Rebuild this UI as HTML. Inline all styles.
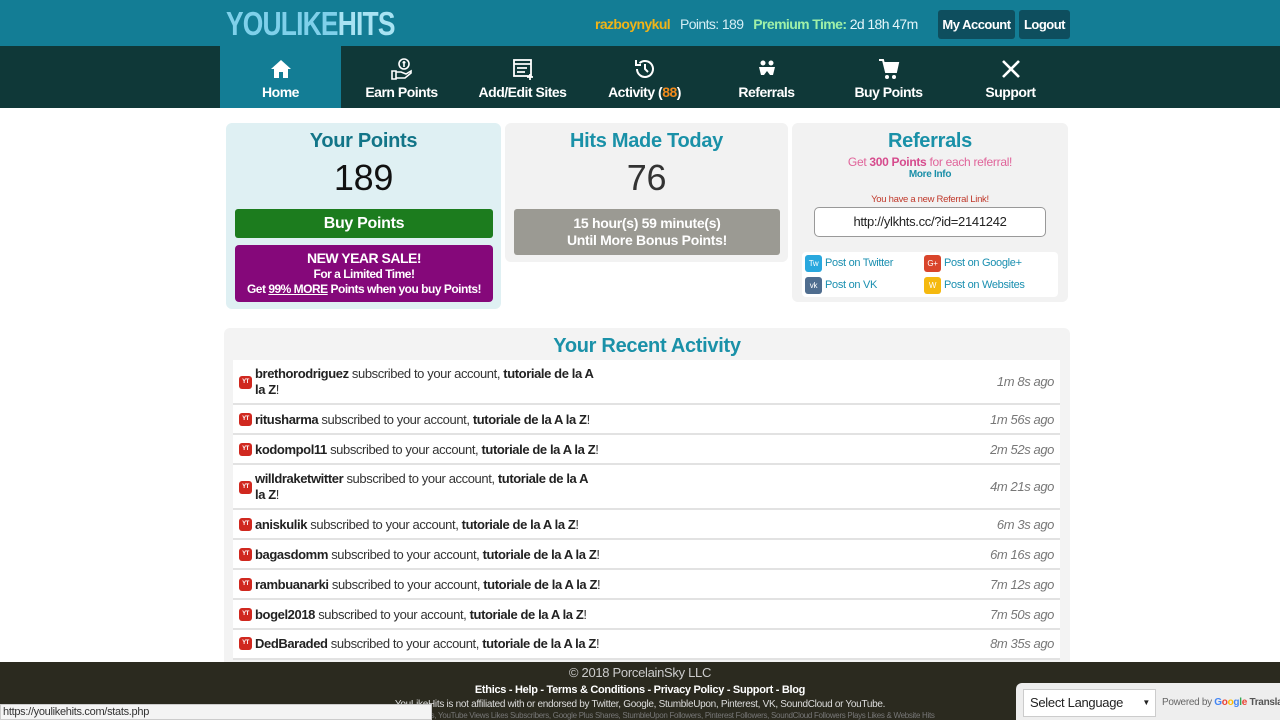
<!DOCTYPE html>
<html><head><meta charset="utf-8"><style>
*{box-sizing:border-box;margin:0;padding:0}
body{width:1280px;height:720px;overflow:hidden;background:#fff;font-family:"Liberation Sans",Arial,sans-serif;position:relative;letter-spacing:-0.3px}
.abs{position:absolute}
#top{left:0;top:0;width:1280px;height:46px;background:#137d95}
#nav{left:0;top:46px;width:1280px;height:62px;background:#0f3838}
.ni{position:absolute;top:46px;width:121px;height:62px;color:#fff;font-weight:bold;font-size:14px;text-align:center;letter-spacing:-0.5px}
.ni svg{display:block;margin:11px auto 3px;width:24px;height:24px}
.card{position:absolute;border-radius:6px;text-align:center}
h2{font-size:20px;font-weight:bold;color:#1a91a8}
.row{position:absolute;left:233px;width:827px;background:#fff;border-bottom:2px solid #e2e2e2;font-size:13px;color:#333;letter-spacing:-0.4px}
.row .t{position:absolute;left:22px;width:345px;line-height:16px}
.row .yt{position:absolute;left:6px;width:13px;height:13px;background:#d0281f;border-radius:3px;color:#fff;font-size:6px;line-height:13px;text-align:center;font-weight:bold}
.row .ago{position:absolute;right:6px;font-style:italic;color:#777;font-size:13px}
b{color:#222}
.soc{position:absolute;font-size:11px;color:#1a8fb0;line-height:18px}
.soc i{display:inline-block;width:17px;height:17px;border-radius:3px;color:#fff;font-style:normal;font-size:8px;text-align:center;line-height:17px;vertical-align:middle;margin-right:3px}
</style></head><body>
<div id="top" class="abs"></div>
<div class="abs" style="left:226px;top:5px;font-size:33px;font-weight:bold;color:#7fd0ea;letter-spacing:-1px;transform:scaleX(0.8);transform-origin:left">YOULIKE<span style="color:#a8e3f3">HITS</span></div>
<div class="abs" style="left:595px;top:16px;font-size:14px;font-weight:bold;white-space:nowrap;letter-spacing:-0.6px"><span style="color:#f0b418">razboynykul</span>&nbsp;&nbsp; <span style="color:#d5eef5;font-weight:normal">Points: 189</span>&nbsp;&nbsp; <span style="color:#9ff0a8">Premium Time:</span> <span style="color:#e6f6fa;font-weight:normal">2d 18h 47m</span></div>
<div class="abs" style="left:938px;top:10px;width:77px;height:29px;background:#0e4e5e;border-radius:3px;color:#fff;font-weight:bold;font-size:13px;line-height:29px;text-align:center;letter-spacing:-0.5px">My Account</div>
<div class="abs" style="left:1019px;top:10px;width:51px;height:29px;background:#0e4e5e;border-radius:3px;color:#fff;font-weight:bold;font-size:13px;line-height:29px;text-align:center;letter-spacing:-0.5px">Logout</div>
<div id="nav" class="abs"></div>
<div class="ni" style="left:220px;background:#137d95"><svg viewBox="0 0 24 24"><path d="M12 3L2 12h3v9h5v-6h4v6h5v-9h3z" fill="#fff"/></svg>Home</div>
<div class="ni" style="left:341px"><svg viewBox="0 0 24 24" fill="none" stroke="#fff" stroke-width="1.6"><circle cx="14" cy="7" r="5"/><path d="M14 4v6M12.5 5.5h3M2 14h4v8H2zM6 15h5l5 2 5-3v2l-6 5H6"/></svg>Earn Points</div>
<div class="ni" style="left:462px"><svg viewBox="0 0 24 24" fill="none" stroke="#fff" stroke-width="1.8"><rect x="3" y="3" width="17" height="16"/><path d="M3 7h17M6 11h10M6 15h8"/><path d="M19 17v6M16 20h6"/></svg>Add/Edit Sites</div>
<div class="ni" style="left:584px"><svg viewBox="0 0 24 24" fill="none" stroke="#fff" stroke-width="2"><path d="M4 12a8 8 0 1 0 2.5-5.8"/><path d="M3 3v5h5M12 7v5l3 3"/></svg>Activity (<span style="color:#f08a1c">88</span>)</div>
<div class="ni" style="left:706px"><svg viewBox="0 0 24 24" fill="#fff"><circle cx="8" cy="6" r="2.5"/><circle cx="16" cy="6" r="2.5"/><path d="M4 10h16l-2 8h-3l-3-4-3 4H6z"/></svg>Referrals</div>
<div class="ni" style="left:828px"><svg viewBox="0 0 24 24" fill="#fff"><path d="M2 3h4l3 12h10l2-9H7" stroke="#fff" stroke-width="2" fill="none"/><rect x="8" y="7" width="12" height="7"/><circle cx="10" cy="20" r="2"/><circle cx="17" cy="20" r="2"/></svg>Buy Points</div>
<div class="ni" style="left:950px"><svg viewBox="0 0 24 24" fill="none" stroke="#fff" stroke-width="2.6"><path d="M4 20L20 4M4 4l16 16"/></svg>Support</div>

<div class="card" style="left:226px;top:123px;width:275px;height:186px;background:#dff0f3">
<h2 style="margin-top:7px;color:#127588">Your Points</h2>
<div style="font-size:36px;color:#111;margin-top:4px">189</div>
<div style="position:absolute;left:9px;top:86px;width:258px;height:29px;background:#1c7c1e;border-radius:3px;color:#fff;font-weight:bold;font-size:16px;line-height:29px">Buy Points</div>
<div style="position:absolute;left:9px;top:122px;width:258px;height:57px;background:#85087a;border-radius:4px;color:#fff;font-weight:bold;font-size:12px;line-height:15px;padding-top:6px;letter-spacing:-0.5px"><span style="font-size:14px">NEW YEAR SALE!</span><br>For a Limited Time!<br>Get <u>99% MORE</u> Points when you buy Points!</div>
</div>
<div class="card" style="left:505px;top:123px;width:283px;height:139px;background:#f2f2f2">
<h2 style="margin-top:7px">Hits Made Today</h2>
<div style="font-size:36px;color:#333;margin-top:4px">76</div>
<div style="position:absolute;left:9px;top:86px;width:266px;height:46px;background:#9b9a93;border-radius:3px;color:#fff;font-weight:bold;font-size:14px;line-height:17px;padding-top:6px">15 hour(s) 59 minute(s)<br>Until More Bonus Points!</div>
</div>
<div class="card" style="left:792px;top:123px;width:276px;height:179px;background:#f2f2f2">
<h2 style="margin-top:7px">Referrals</h2>
<div style="font-size:12px;color:#e0649a;margin-top:2px">Get <b style="color:#d64b8d">300 Points</b> for each referral!</div>
<div style="font-size:10px;color:#1a8fa8;font-weight:bold">More Info</div>
<div style="font-size:9.5px;color:#c0392b;margin-top:14px">You have a new Referral Link!</div>
<div style="position:absolute;left:22px;top:84px;width:232px;height:30px;border:1px solid #999;border-radius:5px;background:#fff;font-size:13px;line-height:28px;color:#222">http://ylkhts.cc/?id=2141242</div>
<div style="position:absolute;left:10px;top:129px;width:256px;height:45px;background:#fff;border-radius:4px"></div>
<div class="soc" style="left:13px;top:131px"><i style="background:#29a8de">Tw</i>Post on Twitter</div>
<div class="soc" style="left:13px;top:153px"><i style="background:#4f6d8f">vk</i>Post on VK</div>
<div class="soc" style="left:132px;top:131px"><i style="background:#d9452b">G+</i>Post on Google+</div>
<div class="soc" style="left:132px;top:153px"><i style="background:#f5b90f">W</i>Post on Websites</div>
</div>

<div class="abs" style="left:224px;top:328px;width:846px;height:340px;background:#f3f3f3;border-radius:6px"></div>
<h2 class="abs" style="left:224px;width:846px;top:335px;text-align:center">Your Recent Activity</h2>
<div class="row" style="top:360px;height:45px"><div class="yt" style="top:16px">YT</div><div class="t" style="top:6px"><b>brethorodriguez</b> subscribed to your account, <b>tutoriale de la A la Z</b>!</div><div class="ago" style="top:14px">1m 8s ago</div></div>
<div class="row" style="top:405px;height:30px"><div class="yt" style="top:8px">YT</div><div class="t" style="top:7px;width:600px"><b>ritusharma</b> subscribed to your account, <b>tutoriale de la A la Z</b>!</div><div class="ago" style="top:7px">1m 56s ago</div></div>
<div class="row" style="top:435px;height:30px"><div class="yt" style="top:8px">YT</div><div class="t" style="top:7px;width:600px"><b>kodompol11</b> subscribed to your account, <b>tutoriale de la A la Z</b>!</div><div class="ago" style="top:7px">2m 52s ago</div></div>
<div class="row" style="top:465px;height:45px"><div class="yt" style="top:16px">YT</div><div class="t" style="top:6px"><b>willdraketwitter</b> subscribed to your account, <b>tutoriale de la A la Z</b>!</div><div class="ago" style="top:14px">4m 21s ago</div></div>
<div class="row" style="top:510px;height:30px"><div class="yt" style="top:8px">YT</div><div class="t" style="top:7px;width:600px"><b>aniskulik</b> subscribed to your account, <b>tutoriale de la A la Z</b>!</div><div class="ago" style="top:7px">6m 3s ago</div></div>
<div class="row" style="top:540px;height:30px"><div class="yt" style="top:8px">YT</div><div class="t" style="top:7px;width:600px"><b>bagasdomm</b> subscribed to your account, <b>tutoriale de la A la Z</b>!</div><div class="ago" style="top:7px">6m 16s ago</div></div>
<div class="row" style="top:570px;height:30px"><div class="yt" style="top:8px">YT</div><div class="t" style="top:7px;width:600px"><b>rambuanarki</b> subscribed to your account, <b>tutoriale de la A la Z</b>!</div><div class="ago" style="top:7px">7m 12s ago</div></div>
<div class="row" style="top:600px;height:30px"><div class="yt" style="top:8px">YT</div><div class="t" style="top:7px;width:600px"><b>bogel2018</b> subscribed to your account, <b>tutoriale de la A la Z</b>!</div><div class="ago" style="top:7px">7m 50s ago</div></div>
<div class="row" style="top:630px;height:30px"><div class="yt" style="top:7px">YT</div><div class="t" style="top:6px;width:600px"><b>DedBaraded</b> subscribed to your account, <b>tutoriale de la A la Z</b>!</div><div class="ago" style="top:6px">8m 35s ago</div></div>

<div class="abs" style="left:0;top:662px;width:1280px;height:58px;background:#2b2a1f;text-align:center;color:#ddd">
<div style="font-size:13px;margin-top:3px;color:#ccc">© 2018 PorcelainSky LLC</div>
<div style="font-size:11px;font-weight:bold;margin-top:4px;color:#fff">Ethics - Help - Terms &amp; Conditions - Privacy Policy - Support - Blog</div>
<div style="font-size:10px;margin-top:3px;color:#ddd">YouLikeHits is not affiliated with or endorsed by Twitter, Google, StumbleUpon, Pinterest, VK, SoundCloud or YouTube.</div>
<div style="font-size:8px;margin-top:1px;color:#777;white-space:nowrap">Twitter Followers, Favorites, YouTube Views Likes Subscribers, Google Plus Shares, StumbleUpon Followers, Pinterest Followers, SoundCloud Followers Plays Likes &amp; Website Hits</div>
</div>
<div class="abs" style="left:0;top:704px;width:432px;height:16px;background:#f4f4f4;border:1px solid #ccc;font-size:11px;color:#333;padding-left:2px;line-height:14px">https://youlikehits.com/stats.php</div>
<div class="abs" style="left:1016px;top:683px;width:264px;height:37px;background:#eee;border-radius:6px 0 0 0"></div>
<div class="abs" style="left:1023px;top:689px;width:133px;height:28px;background:#fff;border:1px solid #ccc;font-size:13px;line-height:26px;padding-left:6px;color:#222">Select Language<span style="position:absolute;right:5px;font-size:8px">▼</span></div>
<div class="abs" style="left:1162px;top:697px;font-size:10px;color:#666;white-space:nowrap">Powered by <b style="color:#4285f4">G<span style="color:#ea4335">o</span><span style="color:#fbbc05">o</span>g<span style="color:#34a853">l</span><span style="color:#ea4335">e</span></b> <b style="color:#555">Translate</b></div>
</body></html>
